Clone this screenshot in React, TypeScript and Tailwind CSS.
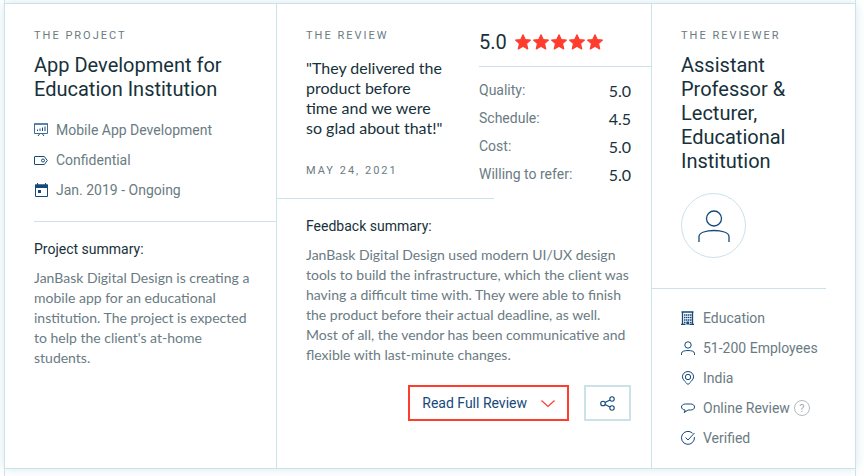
import type { ReactNode } from "react";

const label = "font-[Roboto,sans-serif] text-[11px] leading-4 tracking-[2px] uppercase text-[#6a7b83]";
const title = "mt-[9px] text-xl leading-6 text-[#17313b]";
const summaryTitle = "mt-[17px] text-sm leading-5 text-[#17313b]";
const summaryText = "mt-[9px] font-[Lato,sans-serif] text-sm leading-5";

function Icon({ children }: { children: ReactNode }) {
  return (
    <svg
      viewBox="0 0 14 14"
      className="size-3.5 shrink-0"
      fill="none"
      stroke="#15497b"
      strokeWidth="1"
      aria-hidden="true"
    >
      {children}
    </svg>
  );
}

function Row({ icon, children }: { icon: ReactNode; children: ReactNode }) {
  return (
    <li className="flex items-center gap-2 whitespace-nowrap">
      <Icon>{icon}</Icon>
      {children}
    </li>
  );
}

const presentation = (
  <>
    <path d="M0.5 1H13.5V10.5H0.5Z" stroke="#3f6c95" />
    <path d="M0 1H14" strokeWidth="1.4" stroke="#3f6c95" />
    <path d="M3.5 8V6.5M6 8V5.5M8.5 8V4.5M11 8V3.5M5.5 11L4 13M8.5 11L10 13" />
  </>
);

const tag = (
  <>
    <path d="M1 3.5H10.3L13.3 7.5L10.3 11.5H1Q0.5 11.5 0.5 11V4Q0.5 3.5 1 3.5Z" />
    <circle cx="9" cy="7.5" r="1.5" />
  </>
);

const calendar = (
  <>
    <path d="M1.5 2H13.5V13.5H1.5Z" />
    <path d="M1 1.5H14V5H1Z" fill="#15497b" stroke="none" />
    <path d="M3.5 0V2M11.5 0V2" />
    <path d="M4 7H7V10H4Z" fill="#15497b" stroke="none" />
  </>
);

const building = (
  <>
    <path d="M0.5 1H12.5M1.5 1V13M11.5 1V13M0 13.5H4.5M8.5 13.5H13" strokeWidth="1.3" />
    <path
      d="M3 4H10.5M3 6.5H10.5M3 9H10.5"
      strokeWidth="1.6"
      strokeDasharray="1.5 0.5"
    />
    <path d="M3 11.5H4.5M9 11.5H10.5" strokeWidth="1.5" />
    <path d="M5.3 10.5H8.2V13.5H5.3Z" fill="#15497b" stroke="none" />
  </>
);

const person = (
  <>
    <circle cx="7" cy="4" r="3.2" />
    <path d="M0.5 14V12.2C0.5 8.6 13.5 8.6 13.5 12.2V14" />
  </>
);

const pin = (
  <>
    <path d="M7 13.6C5.5 11.6 1.4 9 1.4 5.9A5.6 5.4 0 0 1 12.6 5.9C12.6 9 8.5 11.6 7 13.6Z" />
    <circle cx="7" cy="6" r="2.7" />
  </>
);

const bubble = (
  <path d="M4.5 3H9.5C12 3 13.5 4.2 13.5 6S12 9 9.5 9H7L3.2 11.6L4.2 9C2 8.8 0.5 7.6 0.5 6S2 3 4.5 3Z" />
);

const verified = (
  <>
    <path d="M11.5 2.2A6.5 6.5 0 1 0 13.4 6" />
    <path d="M4.5 6.5L7 9L13.5 2" />
  </>
);

const scores = [
  ["Quality:", "5.0"],
  ["Schedule:", "4.5"],
  ["Cost:", "5.0"],
  ["Willing to refer:", "5.0"],
];

function Project() {
  return (
    <section className="border-r border-[#cbe2e8] pt-6 pl-[29px]">
      <p className={label}>The Project</p>
      <h2 className={title}>
        App Development for Education Institution
      </h2>
      <ul className="mt-[19px] flex flex-col gap-2.5">
        <Row icon={presentation}>Mobile App Development</Row>
        <Row icon={tag}>Confidential</Row>
        <Row icon={calendar}>Jan. 2019 - Ongoing</Row>
      </ul>
      <hr className="mt-[21px] border-[#cbe2e8]" />
      <h3 className={summaryTitle}>Project summary:</h3>
      <p className={`${summaryText} pr-5`}>
        JanBask Digital Design is creating a mobile app for an educational institution. The project is expected
        to help the client's at-home students.
      </p>
    </section>
  );
}

function Scores() {
  return (
    <div className="pt-[26px]">
      <div className="flex items-center gap-2 text-xl leading-6 text-[#17313b]">
        5.0
        <div className="flex gap-0.5" role="img" aria-label="5 out of 5 stars">
          {[1, 2, 3, 4, 5].map((n) => (
            <svg key={n} viewBox="0 0 16 16" className="size-4" fill="#ff3d2e" stroke="#ff3d2e" strokeWidth="1.2" strokeLinejoin="round">
              <path d="M8 0.8L10.2 5.6L15.4 6.1L11.5 9.6L12.7 14.9L8 12.2L3.3 14.9L4.5 9.6L0.6 6.1L5.8 5.6Z" />
            </svg>
          ))}
        </div>
      </div>
      <hr className="mt-3 border-[#cbe2e8]" />
      <dl className="mt-[13px] flex flex-col gap-2 pr-5">
        {scores.map(([name, value]) => (
          <div key={name} className="flex h-5 justify-between">
            <dt>{name}</dt>
            <dd className="font-[Lato,sans-serif] text-base leading-[22px] text-[#17313b]">{value}</dd>
          </div>
        ))}
      </dl>
    </div>
  );
}

function Review() {
  return (
    <section className="border-r border-[#cbe2e8]">
      <div className="grid grid-cols-[202fr_172fr]">
        <div className="pt-6 pr-[34px] pl-[29px]">
          <p className={label}>The Review</p>
          <blockquote className="mt-3.5 font-[Lato,sans-serif] text-base leading-5 text-[#17313b]">
            "They delivered the product before time and we were so&nbsp;glad about that!"
          </blockquote>
          <p className={`${label} mt-[25px]`}>May 24, 2021</p>
        </div>
        <Scores />
      </div>
      <hr className="mt-3.5 w-[58%] border-[#cbe2e8]" />
      <div className="pr-5 pl-[29px]">
        <h3 className={summaryTitle}>Feedback summary:</h3>
        <p className={summaryText}>
          JanBask Digital Design used modern UI/UX design tools to build the infrastructure, which the client was
          having a difficult time with. They were able to finish the product before their actual deadline, as
          well. Most of all, the vendor has been communicative and flexible with last-minute changes.
        </p>
        <div className="mt-5 flex justify-end gap-[15px]">
          <button
            type="button"
            className="flex h-9 items-center gap-3.5 border-2 border-[#ff3d2e] px-3 text-sm text-[#15497b]"
          >
            Read Full Review
            <svg viewBox="0 0 14 14" className="size-3.5" fill="none" stroke="#ff3d2e" strokeWidth="1.2">
              <path d="M0.5 4.5L7 10.5L13.5 4.5" />
            </svg>
          </button>
          <button
            type="button"
            aria-label="Share"
            className="flex h-9 items-center border-2 border-[#cbe2e8] px-3.5"
          >
            <svg viewBox="0 0 15 15" className="size-[15px]" fill="none" stroke="#15497b" strokeWidth="1.1">
              <circle cx="3" cy="7.5" r="2.3" />
              <circle cx="12" cy="3" r="2.2" />
              <circle cx="12" cy="12" r="2.2" />
              <path d="M5 6.5L10 4M5 8.5L10 11" />
            </svg>
          </button>
        </div>
      </div>
    </section>
  );
}

function Reviewer() {
  return (
    <section className="pt-6 pb-5">
      <div className="pr-14 pl-[29px]">
        <p className={label}>The Reviewer</p>
        <h2 className={title}>Assistant Professor &amp; Lecturer, Educational Institution</h2>
        <div className="mt-5 flex size-[65px] items-center justify-center rounded-full border border-[#cbe2e8]">
          <svg viewBox="0 0 32 32" className="size-8" fill="none" stroke="#15497b" strokeWidth="1.3">
            <circle cx="16" cy="8.5" r="7.5" />
            <path d="M1 32V26.5C1 18.5 31 18.5 31 26.5V32" />
          </svg>
        </div>
      </div>
      <hr className="mt-[30px] mr-[29px] border-[#cbe2e8]" />
      <ul className="mt-[19px] flex flex-col gap-2.5 pl-[29px]">
        <Row icon={building}>Education</Row>
        <Row icon={person}>51-200 Employees</Row>
        <Row icon={pin}>India</Row>
        <Row icon={bubble}>
          <span className="flex items-center gap-1">
            Online Review
            <button
              type="button"
              aria-label="About online reviews"
              className="flex size-4 items-center justify-center rounded-full border border-[#b4babd] text-[11px] leading-none text-[#a4abae]"
            >
              ?
            </button>
          </span>
        </Row>
        <Row icon={verified}>Verified</Row>
      </ul>
    </section>
  );
}

export default function App() {
  return (
    <main className="overflow-hidden bg-white font-[Roboto,sans-serif] text-sm leading-5 text-[#6a7b83]">
      <div className="mr-2 ml-1 border-x border-[#cbe2e8] pt-[3px] pb-[7px]">
        <article className="-mx-px grid grid-cols-[272fr_375fr_203fr] border border-[#cbe2e8] bg-white shadow-[0_0_10px_#d6e8ed]">
          <Project />
          <Review />
          <Reviewer />
        </article>
      </div>
    </main>
  );
}
